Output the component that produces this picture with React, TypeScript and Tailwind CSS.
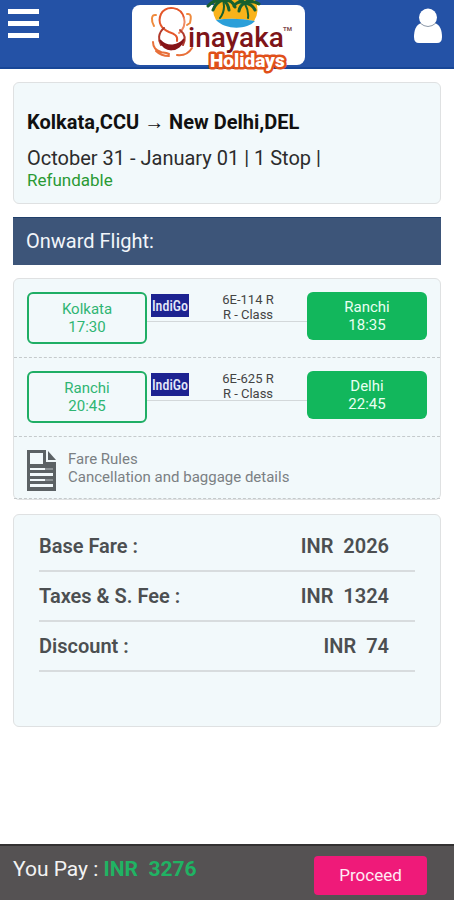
import React from "react";

type Leg = { from: string; departs: string; to: string; arrives: string; flight: string; cabin: string };

const legs: Leg[] = [
  { from: "Kolkata", departs: "17:30", to: "Ranchi", arrives: "18:35", flight: "6E-114 R", cabin: "R - Class" },
  { from: "Ranchi", departs: "20:45", to: "Delhi", arrives: "22:45", flight: "6E-625 R", cabin: "R - Class" },
];

const fares = [
  { label: "Base Fare :", amount: 2026 },
  { label: "Taxes & S. Fee :", amount: 1324 },
  { label: "Discount :", amount: 74 },
];

const card = "rounded-md border border-[#dfe1e2] bg-[#f2f9fb]";

function Logo() {
  return (
    <svg width="173" height="76" viewBox="0 0 173 76" className="-mb-2 shrink-0" role="img" aria-label="Vinayaka Holidays">
      <rect x="0" y="5" width="173" height="60" rx="8" fill="#fff" />
      {/* sun, sea and palms */}
      <path d="M84 0a20 20 0 0 0 0 20q18-3 38 1a20 20 0 0 0 1-21Z" fill="#f9b31a" />
      <path d="M84 20q18-3 39 1c-8 9-30 9-39-1Z" fill="#2b9fd9" />
      <g fill="none" stroke="#17602f" strokeLinecap="round">
        <path d="M91 0q3 10-3 18M113 4q4 7 3 14" strokeWidth="2" />
        <path d="M91 0q-9-1-15 6M91 0q-7 2-10 10M91 0q9-1 12 7M91 0q5 3 6 10" strokeWidth="3" />
        <path d="M113 3q-7-3-11 3M113 3q-5 2-6 8M113 3q8-3 14 1M113 3q7 1 10 7M113 3q-2-2-5-3M113 3q3-3 7-3" strokeWidth="3" />
      </g>
      {/* elephant emblem */}
      <g fill="none" strokeLinecap="round">
        <path d="M52 18C49 6 34 5 29 14c-4 9 1 15 8 18 6 2 9 4 8 9" stroke="#e4572a" strokeWidth="2" />
        <path d="M52 18c2 6-1 12-5 15" stroke="#ef8b63" strokeWidth="2" />
        <path d="M32 28c-6 5-6 12-3 17M48 30c5 4 6 9 3 15" stroke="#b03a2c" strokeWidth="2" />
        <path d="M28 40c3 13 20 13 24-1-5 7-17 9-24 1Z" fill="#861317" stroke="#861317" strokeWidth="1.5" />
        <path d="M24 15c-5-1-5 6-2 11M55 14c5-1 4 5 3 9l-3 2" stroke="#ef8a3c" strokeWidth="2" />
        <path d="M21 42c0 6 3 8 8 10 1 1 4 0 8 2M45 55c8 1 12-2 15-7M24 51c4 4 8 5 13 5" stroke="#e8703a" strokeWidth="2" />
      </g>
      <text x="56" y="47" fontSize="28" fontWeight="500" fill="#7e1418" fontFamily="Roboto, sans-serif">inayaka</text>
      <text x="151" y="31" fontSize="6" fontWeight="700" fill="#7e4a4c" fontFamily="Roboto, sans-serif">TM</text>
      <text x="78" y="67" fontSize="19" fontWeight="900" fill="#fff" stroke="#e0501a" strokeWidth="5" strokeLinejoin="round" paintOrder="stroke" fontFamily="Roboto, sans-serif">Holidays</text>
    </svg>
  );
}

function DocumentIcon() {
  return (
    <svg width="29" height="41" viewBox="0 0 29 41" aria-hidden="true" className="shrink-0">
      <path d="M0 0h19v12h10v29H0Z" fill="#5c6265" />
      <path d="M21 1l8 9h-8Z" fill="#5c6265" />
      <path d="M3 3h13v11H3ZM3 18h15v2H3ZM3 23h23v3H3ZM3 29h15v2H3ZM3 34h23v3H3Z" fill="#f2f9fb" />
      <path d="M18 15h8M18 18h8v2h-8ZM18 29h8v2h-8Z" fill="#8d9396" />
    </svg>
  );
}

function LegRow({ leg }: { leg: Leg }) {
  return (
    <li className="flex h-[79px] items-start border-b border-dashed border-[#c5cacc] px-[13px] pt-[13px] text-[15px] leading-[18px]">
      <div className="w-[120px] shrink-0 rounded-md border-2 border-[#1fae65] py-[6px] text-center text-[#2fb573]">
        <div>{leg.from}</div>
        <div>{leg.departs}</div>
      </div>
      <div className="flex h-[30px] min-w-0 grow items-start border-b border-[#d3d8da] pl-1">
        <div className="mt-[2px] h-[23px] w-[38px] shrink-0 bg-[#1d2391]">
          <svg width="38" height="23" viewBox="0 0 38 23" role="img" aria-label="IndiGo">
            <text x="19" y="17" textAnchor="middle" fontSize="14" fontWeight="500" fill="#e4e9fa" fontFamily="'Roboto Condensed', Roboto, sans-serif">IndiGo</text>
          </svg>
        </div>
        <div className="grow text-center text-[13px] leading-[15px] text-[#444]">
          <div>{leg.flight}</div>
          <div>{leg.cabin}</div>
        </div>
      </div>
      <div className="h-12 w-[120px] shrink-0 rounded-md bg-[#12b75c] pt-[6px] text-center text-[#e9fff2]">
        <div>{leg.to}</div>
        <div>{leg.arrives}</div>
      </div>
    </li>
  );
}

export default function App() {
  return (
    <div className="flex min-h-screen flex-col bg-white font-['Roboto',sans-serif]">
      <header className="grid h-[69px] grid-cols-[1fr_auto_1fr] items-start border-b-2 border-[#174697] bg-[#2452a6] pr-[11px] pl-2">
        <button type="button" aria-label="Menu" className="flex w-[31px] flex-col gap-[7px] pt-[9px]">
          <span className="h-[5px] w-full bg-white" />
          <span className="h-[5px] w-full bg-white" />
          <span className="h-[5px] w-full bg-white" />
        </button>
        <div className="pr-[14px]">
          <Logo />
        </div>
        <button type="button" aria-label="Account" className="justify-self-end pt-2">
          <svg width="30" height="36" viewBox="0 0 30 36" aria-hidden="true">
            <path d="M8 15C3 17 1 22 1 29q0 6 5 6h18q5 0 5-6c0-7-2-12-7-14Z" fill="#fff" />
            <circle cx="15" cy="9.500" r="9" fill="#fff" />
            <path d="M7 15q8 7 16 0" fill="none" stroke="#8d99a8" strokeWidth="1" />
          </svg>
        </button>
      </header>

      <main className="grow px-[13px] pt-[13px] pb-4">
        <section className={`${card} h-[122px] px-[13px] pt-[26px]`}>
          <h1 className="text-[20px] leading-[26px] font-bold text-[#111]">Kolkata,CCU → New Delhi,DEL</h1>
          <p className="mt-3 text-[20px] leading-[22px] text-[#2c2c2c]">October 31 - January 01 | 1 Stop |</p>
          <p className="text-[17px] leading-[22px] text-[#2a9a35]">Refundable</p>
        </section>

        <h2 className="mt-[13px] border-t border-[#21406b] bg-[#3d5579] px-[13px] text-[20px] leading-[47px] text-[#f2f5fa]">Onward Flight:</h2>

        <section className={`${card} mt-[13px]`}>
          <ul>
            {legs.map((leg) => (
              <LegRow key={leg.flight} leg={leg} />
            ))}
          </ul>
          <a href="#fare-rules" className="flex h-[62px] items-start gap-3 border-b border-dashed border-[#c5cacc] px-[13px] pt-[13px] text-[15px] leading-[18px] text-[#7b8083]">
            <DocumentIcon />
            <span>
              Fare Rules
              <br />
              Cancellation and baggage details
            </span>
          </a>
        </section>

        <section className={`${card} mt-[14px] px-[25px] pt-[7px] pb-[54px]`}>
          <dl className="text-[20px] leading-[48px] font-semibold text-[#4c4f51]">
            {fares.map((fare) => (
              <div key={fare.label} className="flex justify-between border-b-2 border-[#d8dcde] pr-[26px]">
                <dt>{fare.label}</dt>
                <dd className="whitespace-pre">INR  {fare.amount}</dd>
              </div>
            ))}
          </dl>
        </section>
      </main>

      <footer className="sticky bottom-0 flex h-14 items-start justify-between border-t-2 border-[#333132] bg-[#555253] pr-[27px] pl-[13px]">
        <p className="pt-2 text-[21px] leading-[30px] text-[#f3f3f3]">
          You Pay : <strong className="font-bold whitespace-pre text-[#20b363]">INR  3276</strong>
        </p>
        <button type="button" className="mt-[10px] h-[39px] w-[113px] rounded-sm bg-[#ef1a79] text-[17px] text-[#ffeaf4]">
          Proceed
        </button>
      </footer>
    </div>
  );
}
